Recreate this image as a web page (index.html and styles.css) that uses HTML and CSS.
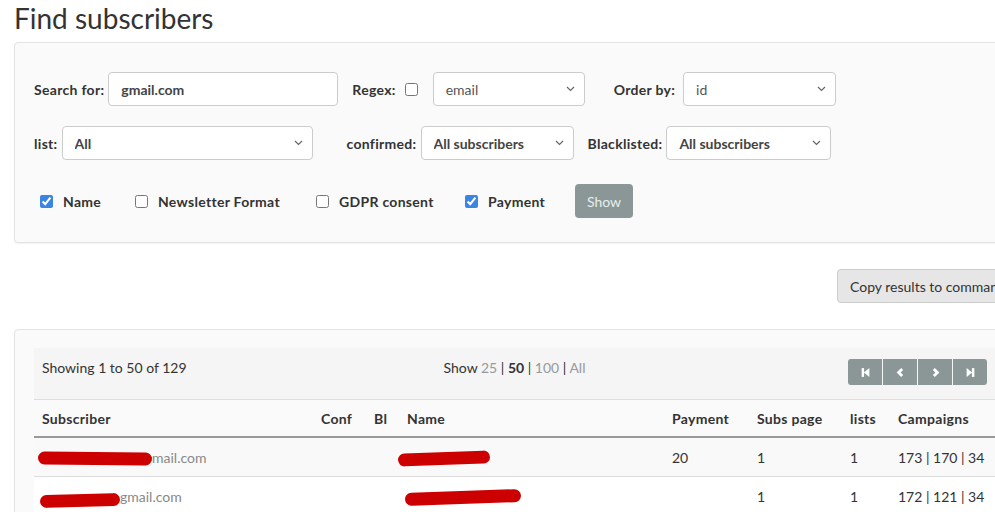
FILE: index.html
```html
<!DOCTYPE html>
<html lang="en">
<head>
    <meta charset="UTF-8">
    <title>Find subscribers</title>
    <link rel="stylesheet" href="styles.css">
</head>
<body>
    <h1 class="title">Find subscribers</h1>

    <div class="panel filters">
        <div class="row">
            <label class="lbl">Search for:</label>
            <input type="text" class="field search" value="gmail.com">
            <label class="lbl regex-lbl">Regex:</label>
            <input type="checkbox" class="box regex-box">
            <span class="sel sel-field">
                <select class="field"><option>email</option></select>
                <svg class="caret" width="9" height="6" viewBox="0 0 9 6"><path d="M1 1 L4.5 4.5 L8 1" stroke="#666" stroke-width="1.2" fill="none"/></svg>
            </span>
            <label class="lbl order-lbl">Order by:</label>
            <span class="sel sel-order">
                <select class="field"><option>id</option></select>
                <svg class="caret" width="9" height="6" viewBox="0 0 9 6"><path d="M1 1 L4.5 4.5 L8 1" stroke="#666" stroke-width="1.2" fill="none"/></svg>
            </span>
        </div>
        <div class="row">
            <label class="lbl">list:</label>
            <span class="sel sel-list">
                <select class="field bold"><option>All</option></select>
                <svg class="caret" width="9" height="6" viewBox="0 0 9 6"><path d="M1 1 L4.5 4.5 L8 1" stroke="#666" stroke-width="1.2" fill="none"/></svg>
            </span>
            <label class="lbl conf-lbl">confirmed:</label>
            <span class="sel sel-conf">
                <select class="field bold"><option>All subscribers</option></select>
                <svg class="caret" width="9" height="6" viewBox="0 0 9 6"><path d="M1 1 L4.5 4.5 L8 1" stroke="#666" stroke-width="1.2" fill="none"/></svg>
            </span>
            <label class="lbl bl-lbl">Blacklisted:</label>
            <span class="sel sel-bl">
                <select class="field bold"><option>All subscribers</option></select>
                <svg class="caret" width="9" height="6" viewBox="0 0 9 6"><path d="M1 1 L4.5 4.5 L8 1" stroke="#666" stroke-width="1.2" fill="none"/></svg>
            </span>
        </div>
        <div class="row checks">
            <label class="check c-name"><input type="checkbox" class="box" checked> Name</label>
            <label class="check c-format"><input type="checkbox" class="box"> Newsletter Format</label>
            <label class="check c-gdpr"><input type="checkbox" class="box"> GDPR consent</label>
            <label class="check c-pay"><input type="checkbox" class="box" checked> Payment</label>
            <button class="btn-show">Show</button>
        </div>
    </div>

    <div class="copy-row">
        <button class="btn-copy">Copy results to command line</button>
    </div>

    <div class="panel results">
        <div class="bar">
            <div class="count">Showing 1 to 50 of 129</div>
            <div class="per-page">Show <a>25</a> | <b>50</b> | <a>100</a> | <a>All</a></div>
            <div class="pager">
                <span class="pg"><svg width="11" height="11" viewBox="0 0 10 10"><rect x="1.5" y="1" width="2.2" height="8" fill="#fff"/><path d="M8.5 1 L3.5 5 L8.5 9 Z" fill="#fff"/></svg></span>
                <span class="pg"><svg width="11" height="11" viewBox="0 0 10 10"><path d="M6.5 1.8 L3.3 5 L6.5 8.2" stroke="#fff" stroke-width="2.6" fill="none"/></svg></span>
                <span class="pg"><svg width="11" height="11" viewBox="0 0 10 10"><path d="M3.5 1.8 L6.7 5 L3.5 8.2" stroke="#fff" stroke-width="2.6" fill="none"/></svg></span>
                <span class="pg"><svg width="11" height="11" viewBox="0 0 10 10"><path d="M1.5 1 L6.5 5 L1.5 9 Z" fill="#fff"/><rect x="6.3" y="1" width="2.2" height="8" fill="#fff"/></svg></span>
            </div>
        </div>
        <table class="subs">
            <colgroup>
                <col style="width:279px">
                <col style="width:53px">
                <col style="width:33px">
                <col style="width:265px">
                <col style="width:85px">
                <col style="width:93px">
                <col style="width:48px">
                <col style="width:106px">
            </colgroup>
            <thead>
                <tr>
                    <th>Subscriber</th>
                    <th>Conf</th>
                    <th>Bl</th>
                    <th>Name</th>
                    <th>Payment</th>
                    <th>Subs page</th>
                    <th>lists</th>
                    <th>Campaigns</th>
                </tr>
            </thead>
            <tbody>
                <tr>
                    <td class="email"><span class="redact r1"></span>mail.com</td>
                    <td></td>
                    <td></td>
                    <td><span class="redact r2"></span></td>
                    <td>20</td>
                    <td>1</td>
                    <td>1</td>
                    <td>173 | 170 | 34</td>
                </tr>
                <tr>
                    <td class="email"><span class="redact r3"></span>gmail.com</td>
                    <td></td>
                    <td></td>
                    <td><span class="redact r4"></span></td>
                    <td></td>
                    <td>1</td>
                    <td>1</td>
                    <td>172 | 121 | 34</td>
                </tr>
            </tbody>
        </table>
    </div>
</body>
</html>
```

FILE: styles.css
```css
html {
    overflow: hidden;
}
body {
    margin: 0;
    padding: 0 0 0 14px;
    font-family: Lato, "Liberation Sans", sans-serif;
    font-size: 14px;
    color: #333;
    background-color: #fff;
}
.title {
    margin: 0;
    padding-top: 1px;
    font-size: 28px;
    font-weight: 400;
    line-height: 34px;
    height: 41px;
    color: #333;
}
.panel {
    width: 962px;
    background-color: #fafafa;
    border: 1px solid #e3e3e3;
    border-radius: 4px;
    box-shadow: 0 1px 1px rgba(0, 0, 0, 0.05);
}
.filters {
    padding: 29px 19px 24px;
}
.row {
    display: flex;
    align-items: center;
    height: 34px;
    margin-bottom: 20px;
}
.lbl {
    font-weight: 700;
    letter-spacing: 0.3px;
    margin-right: 4px;
}
.field {
    height: 34px;
    box-sizing: border-box;
    border: 1px solid #ccc;
    border-radius: 4px;
    background-color: #fff;
    font-family: inherit;
    font-size: 14px;
    color: #555;
    padding: 0 8px 0 12px;
}
.field.bold {
    font-weight: 700;
    color: #444;
}
.search {
    width: 230px;
    font-weight: 700;
    color: #444;
}
.sel {
    position: relative;
    display: block;
}
.sel select {
    appearance: none;
    width: 100%;
    outline: none;
}
.caret {
    position: absolute;
    right: 10px;
    top: 14px;
    pointer-events: none;
}
.regex-lbl {
    margin-left: 14px;
}
.box {
    width: 13px;
    height: 13px;
    margin: 0;
    accent-color: #3a84e4;
}
.regex-box {
    margin-left: 5px;
}
.sel-field {
    width: 152px;
    margin-left: 15px;
}
.order-lbl {
    margin-left: 29px;
    margin-right: 8px;
}
.sel-order {
    width: 153px;
}
.sel-list {
    width: 251px;
}
.conf-lbl {
    margin-left: 34px;
}
.sel-conf {
    width: 153px;
}
.bl-lbl {
    margin-left: 14px;
}
.sel-bl {
    width: 165px;
}
.checks {
    margin-bottom: 0;
    margin-top: 24px;
    padding-left: 6px;
}
.check {
    display: flex;
    align-items: center;
    gap: 10px;
    font-weight: 700;
    letter-spacing: 0.3px;
}
.c-name {
    width: 95px;
}
.c-format {
    width: 181px;
}
.c-gdpr {
    width: 149px;
}
.c-pay {
    width: 110px;
}
.btn-show {
    height: 34px;
    padding: 0 12px;
    border: none;
    border-radius: 4px;
    background-color: #8a9796;
    color: #e6eeee;
    font-family: inherit;
    font-size: 14px;
}
.copy-row {
    padding: 26px 0 26px 823px;
    width: 300px;
}
.btn-copy {
    height: 34px;
    padding: 0 12px;
    border: 1px solid #ccc;
    border-radius: 4px;
    background-color: #e6e6e6;
    color: #333;
    font-family: inherit;
    font-size: 14px;
    white-space: nowrap;
}
.results {
    padding: 18px 19px 19px;
}
.bar {
    display: flex;
    justify-content: space-between;
    align-items: flex-start;
    height: 52px;
    box-sizing: border-box;
    padding: 10px 9px 0 8px;
    background-color: #f5f5f5;
    border-bottom: 1px solid #ddd;
}
.count, .per-page {
    line-height: 20px;
    width: 200px;
}
.per-page {
    text-align: center;
}
.per-page a {
    color: #999;
}
.per-page b {
    color: #333;
}
.pager {
    width: 200px;
    display: flex;
    justify-content: flex-end;
    padding-top: 1px;
}
.pg {
    width: 34px;
    height: 26px;
    display: flex;
    align-items: center;
    justify-content: center;
    background-color: #8a9796;
    margin-left: 1px;
}
.pg:first-child {
    border-radius: 3px 0 0 3px;
}
.pg:last-child {
    border-radius: 0 3px 3px 0;
}
.subs {
    border-collapse: collapse;
    table-layout: fixed;
    width: 962px;
}
.subs th {
    text-align: left;
    font-weight: 700;
    letter-spacing: 0.3px;
    height: 36px;
    padding: 0 8px;
    border-bottom: 2px solid #999;
}
.subs td {
    height: 38px;
    padding: 0 8px;
    border-bottom: 1px solid #ddd;
    white-space: nowrap;
}
.subs tbody tr:nth-child(odd) {
    background-color: #f9f9f9;
}
.subs tbody tr:nth-child(even) {
    background-color: #fff;
}
.email {
    color: #888;
}
.redact {
    display: inline-block;
    height: 13px;
    border-radius: 7px;
    background-color: #cc0000;
    vertical-align: middle;
}
.r1 {
    width: 114px;
    margin-left: -4px;
    transform: rotate(0.5deg);
}
.r2 {
    width: 92px;
    margin-left: -9px;
    transform: rotate(-2deg);
}
.r3 {
    width: 80px;
    margin-left: -2px;
    position: relative;
    top: 3px;
    transform: rotate(-1.5deg);
}
.r4 {
    width: 116px;
    margin-left: -2px;
    transform: rotate(-2deg);
}
```
